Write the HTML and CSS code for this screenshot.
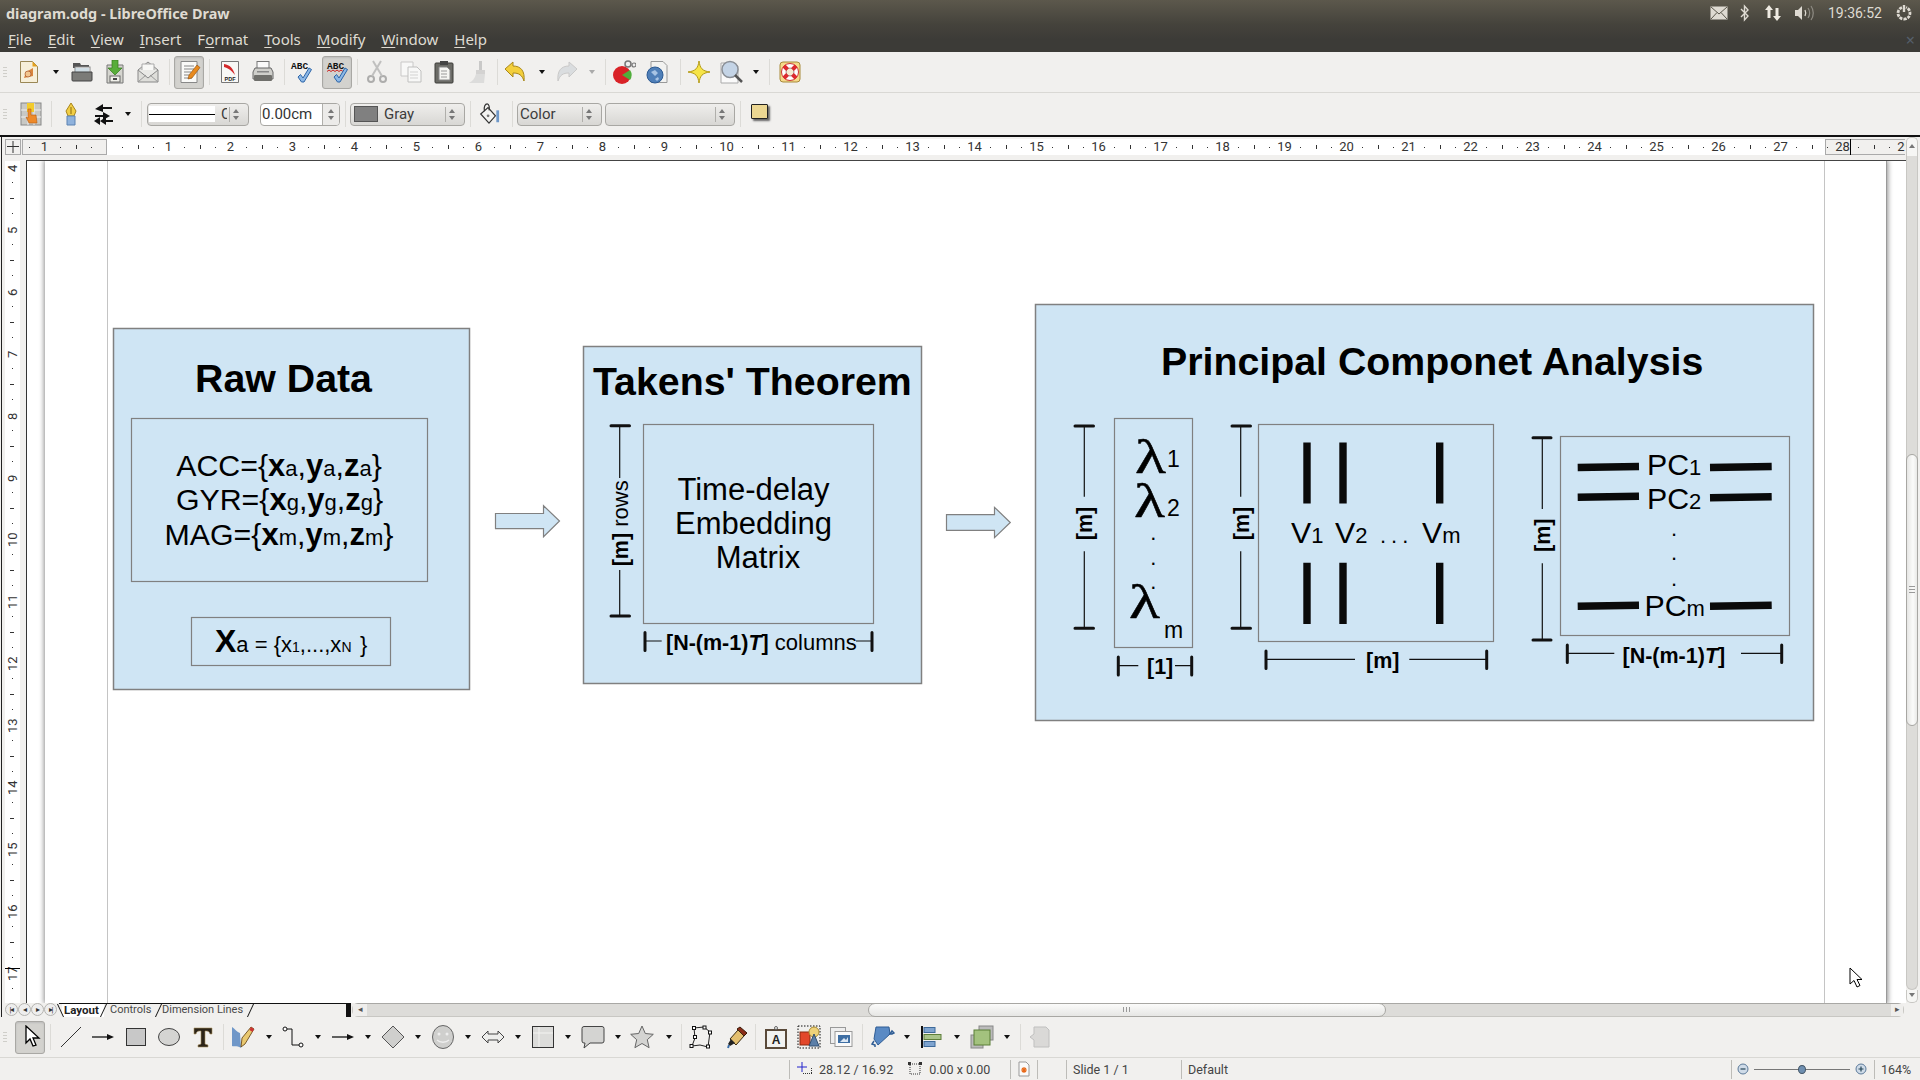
FILE: index.html
```html
<!DOCTYPE html>
<html lang="en">
<head>
<meta charset="utf-8">
<title>diagram.odg - LibreOffice Draw</title>
<link rel="stylesheet" href="styles.css">
</head>
<body>
<div class="app">

<header class="panel">
  <div class="titlebar">
    <div class="wintitle">diagram.odg - LibreOffice Draw</div>
    <div class="tray">
      <svg class="tr tr-mail" viewBox="0 0 18 14"><rect x="0.5" y="0.5" width="17" height="13" fill="#dedad2"/><path d="M1 1l8 7 8-7M1 13l6-6.5M17 13l-6-6.5" fill="none" stroke="#5a574c"/></svg>
      <svg class="tr tr-bt" viewBox="0 0 10 18"><path d="M1 5l7 7-3.5 4V2L8 6l-7 7" fill="none" stroke="#dedad2" stroke-width="1.4"/></svg>
      <svg class="tr tr-net" viewBox="0 0 18 18"><path d="M5 1l4 5H6.5v8h-3V6H1z" fill="#eeeae2"/><path d="M13 17l4-5h-2.500V4h-3v8H9z" fill="#eeeae2"/></svg>
      <svg class="tr tr-snd" viewBox="0 0 20 16"><path d="M1 5h3l4-4v14l-4-4H1z" fill="#dedad2"/><path d="M11 5c1 2 1 4 0 6" fill="none" stroke="#dedad2" stroke-width="1.300"/><path d="M14 3c2 3 2 7 0 10M17 1c3 4 3 10 0 14" fill="none" stroke="#8f8c84" stroke-width="1.200"/></svg>
      <span class="clock">19:36:52</span>
      <svg class="tr tr-pow" viewBox="0 0 16 16"><path d="M6 2.500a6 6 0 1 0 4 0" fill="none" stroke="#dedad2" stroke-width="2.800" stroke-dasharray="3 1"/><path d="M8 0v7" stroke="#dedad2" stroke-width="2.400"/></svg>
    </div>
  </div>
  <nav class="menubar">
    <span class="mi"><u>F</u>ile</span><span class="mi"><u>E</u>dit</span><span class="mi"><u>V</u>iew</span><span class="mi"><u>I</u>nsert</span><span class="mi">F<u>o</u>rmat</span><span class="mi"><u>T</u>ools</span><span class="mi"><u>M</u>odify</span><span class="mi"><u>W</u>indow</span><span class="mi"><u>H</u>elp</span>
    <span class="winclose">×</span>
  </nav>
</header>

<div class="tb tb1">
  <i class="grip"></i>
  <svg class="ic" viewBox="0 0 24 24"><path d="M3.500 1.500h12l5 5v16h-17z" fill="#f7efd9" stroke="#9a8755"/><path d="M15.500 1.500l5 5h-5z" fill="#e4a11f"/><path d="M7 18l2-6 7-4 0 8z" fill="#d9843b"/><circle cx="11" cy="14" r="3" fill="#f2c58e" stroke="#a8552a" stroke-width=".7"/></svg>
  <i class="dd"></i>
  <svg class="ic" viewBox="0 0 24 24"><path d="M3 6V3h7l1 2h8v3H3z" fill="#555"/><rect x="5" y="7" width="15" height="6" fill="#fff" stroke="#888"/><path d="M5 9h14M5 11h14" stroke="#8ab" stroke-width=".8"/><path d="M2 12h20v8a1 1 0 0 1-1 1H3a1 1 0 0 1-1-1z" fill="#7b7b78" stroke="#444"/></svg>
  <svg class="ic" viewBox="0 0 24 24"><path d="M4 5h16v18H4z" fill="#d5d5cf" stroke="#777"/><rect x="7" y="16" width="10" height="6" fill="#f0f0ea" stroke="#666"/><rect x="10" y="18" width="4" height="2" fill="#444"/><path d="M9 0h6v8h4l-7 7-7-7h4z" fill="#58ad3a" stroke="#347a1e" stroke-width=".7"/></svg>
  <svg class="ic" viewBox="0 0 24 24"><path d="M2 10L12 2l10 8v12H2z" fill="#dededa" stroke="#888"/><path d="M6 4h12v9H6z" fill="#f8f8f6" stroke="#aaa"/><path d="M2 10l10 8 10-8" fill="#e9e9e6" stroke="#888"/><path d="M2 22l8-7M22 22l-8-7" stroke="#999"/></svg>
  <i class="sp"></i>
  <span class="act"><svg class="ic0" viewBox="0 0 24 24"><path d="M4 1.500h16v21H4z" fill="#fafaf8" stroke="#888"/><path d="M7 6h10M7 9h10M7 12h7M7 15h5M7 18h8" stroke="#888"/><path d="M11 19l1-4L20 5l3 2.500L15 18z" fill="#e88a1e" stroke="#8a4c0c" stroke-width=".6"/></svg></span>
  <i class="sp"></i>
  <svg class="ic" viewBox="0 0 24 24"><path d="M3.500 1.500h17v21h-17z" fill="#f8f8f6" stroke="#777"/><path d="M6 4c6 1 9 4 11 11-4-5-7-7-11-8z" fill="#d3282a"/><text class="pdf" x="12" y="21" text-anchor="middle">PDF</text></svg>
  <svg class="ic" viewBox="0 0 24 24"><rect x="6" y="1.500" width="12" height="8" fill="#fafafa" stroke="#777"/><path d="M4 8h16l2 4v7H2v-7z" fill="#cfcfcb" stroke="#666"/><rect x="3" y="15" width="18" height="6" rx="1" fill="#6f6f6b"/><rect x="6" y="11" width="12" height="1.500" fill="#888"/></svg>
  <i class="sp"></i>
  <svg class="ic" viewBox="0 0 24 24"><text class="abc" x="2" y="9">ABC</text><path d="M9 17l2.500-2.500 2.500 3.500 6-10 2.500 1.500-7.500 12.500h-2.500z" fill="#8db8e6" stroke="#2c65a8"/></svg>
  <span class="act"><svg class="ic0" viewBox="0 0 24 24"><text class="abc" x="2" y="9">ABC</text><path d="M2 11.500l2-1.500 2 1.500 2-1.500 2 1.500 2-1.500 2 1.500 2-1.500 2 1.500" fill="none" stroke="#c22"/><path d="M9 17l2.500-2.500 2.500 3.500 6-10 2.500 1.500-7.500 12.500h-2.500z" fill="#8db8e6" stroke="#2c65a8"/></svg></span>
  <i class="sp"></i>
  <svg class="ic off" viewBox="0 0 24 24"><circle cx="6" cy="19" r="3" fill="none" stroke="#777" stroke-width="2"/><circle cx="18" cy="19" r="3" fill="none" stroke="#777" stroke-width="2"/><path d="M7 16L16 1M17 16L8 1" stroke="#999" stroke-width="2"/></svg>
  <svg class="ic off" viewBox="0 0 24 24"><path d="M2 2h12v14H2z" fill="#fff" stroke="#aaa"/><path d="M9 7h9l4 4v11H9z" fill="#fff" stroke="#999"/><path d="M11 12h8M11 15h8M11 18h8" stroke="#bbb"/></svg>
  <svg class="ic" viewBox="0 0 24 24"><rect x="3" y="3" width="18" height="20" rx="1" fill="#6b6b66" stroke="#3c3c38"/><rect x="8" y="1" width="8" height="4" fill="#444"/><path d="M7 7h8l3 3v10H7z" fill="#f5f5f2" stroke="#888"/><path d="M9 11h6M9 14h6M9 17h6" stroke="#999"/></svg>
  <svg class="ic off" viewBox="0 0 24 24"><path d="M14 1h3v9h-3z" fill="#aaa"/><path d="M11 10h9v4h-9z" fill="#bbb"/><path d="M11 14h9l-1 9H4c4-2 6-5 7-9z" fill="#ccc"/></svg>
  <i class="sp"></i>
  <svg class="ic" viewBox="0 0 24 24"><path d="M2 9l8-7v4c8 0 12 5 11 15-2-6-5-8-11-8v4z" fill="#f3cf3c" stroke="#a8871a"/></svg>
  <i class="dd"></i>
  <svg class="ic off" viewBox="0 0 24 24"><path d="M22 9l-8-7v4C6 6 2 11 3 21c2-6 5-8 11-8v4z" fill="#c9cfd4" stroke="#aaa"/></svg>
  <i class="dd dd-off"></i>
  <i class="sp"></i>
  <svg class="ic" viewBox="0 0 24 24"><circle cx="10" cy="15" r="9" fill="#d92227"/><path d="M10 15l8-5a9 9 0 0 1 0 10z" fill="#4fae3a"/><circle cx="16" cy="4" r="3" fill="#eee" stroke="#777" stroke-width="1.500"/><circle cx="22" cy="5" r="2" fill="#eee" stroke="#777" stroke-width="1.200"/></svg>
  <svg class="ic" viewBox="0 0 24 24"><path d="M5 1.500h12l4 4v17H5z" fill="#f2f2f0" stroke="#999"/><circle cx="9" cy="15" r="8" fill="#4f7fb8" stroke="#2b5a93"/><path d="M5 12l4-2 3 3-3 3zM9 19l3-2 1 2-2 2z" fill="#a8c4e4"/></svg>
  <i class="sp"></i>
  <svg class="ic" viewBox="0 0 24 24"><path d="M12 1c1 7 3 10 11 11-8 1-10 4-11 11-1-7-3-10-11-11 8-1 10-4 11-11z" fill="#f6e447" stroke="#b49a14"/></svg>
  <svg class="ic" viewBox="0 0 24 24"><path d="M2 3h14l3 3v17H2z" fill="#fafafa" stroke="#aaa"/><circle cx="11" cy="9.500" r="8" fill="#c4d4e6" stroke="#8a8f96" stroke-width="1.500"/><path d="M16 15l7 7" stroke="#555" stroke-width="2.500"/></svg>
  <i class="dd"></i>
  <i class="sp"></i>
  <svg class="ic" viewBox="0 0 24 24"><rect x="2" y="2" width="20" height="20" rx="3" fill="#f5d98a" stroke="#a88a3a"/><circle cx="12" cy="12" r="8.500" fill="#fff" stroke="#c33"/><circle cx="12" cy="12" r="4" fill="#f5ead0" stroke="#a88"/><path d="M6 6l3.500 3.500M18 6l-3.500 3.500M6 18l3.500-3.500M18 18l-3.500-3.500" stroke="#dd2a2e" stroke-width="4"/></svg>
</div>

<div class="tb tb2">
  <i class="grip"></i>
  <svg class="ic2" viewBox="0 0 22 24"><rect x="1" y="1" width="20" height="22" fill="#c8c8c4" stroke="#888"/><path d="M8 1v22M14 1v22M1 8h20M1 15h20" stroke="#eee"/><rect x="7" y="1" width="7" height="9" fill="#f2cb2c"/><path d="M8 7h3v6h5l1 8H9l-3-6 2 1z" fill="#ee8a2a" stroke="#b55a10" stroke-width=".6"/></svg>
  <i class="sp"></i>
  <svg class="ic2" viewBox="0 0 22 24"><path d="M11 1l5 8-2 5H8L6 9z" fill="#f1ce45" stroke="#a9851a"/><path d="M11 5v7" stroke="#8a6c10"/><path d="M7 14h8v9H7z" fill="#8fb2dc" stroke="#5c83b2"/></svg>
  <svg class="ic2 wide" viewBox="0 0 24 24"><path d="M4 7l8-5v3h9v2h-9v3zM19 14l-7-4v3H4v2h8v3z" fill="#111"/><path d="M3 19l6-4v8zM9 19l6-4v8zM15 18h7v2h-7z" fill="#111"/></svg>
  <i class="dd"></i>
  <i class="sp"></i>
  <div class="combo c-line"><span class="linebox"><b class="linesample"></b></span><span class="cliptext">C</span><span class="spin"><em class="up"></em><em class="dn"></em></span></div>
  <div class="spinner"><span class="spval">0.00cm</span><span class="spbtn"><em class="up"></em><em class="dn"></em></span></div>
  <i class="sp"></i>
  <div class="combo c-gray"><b class="swatch"></b><span class="ctext">Gray</span><span class="spin"><em class="up"></em><em class="dn"></em></span></div>
  <i class="sp"></i>
  <svg class="ic2" viewBox="0 0 24 24"><path d="M3 12L11 5l8 9-7 8z" fill="#f4f4f2" stroke="#333" stroke-width="1.300"/><path d="M7 9c-1-5 1-8 3-8s3 4 2 7" fill="none" stroke="#333" stroke-width="1.300"/><path d="M20 8h3v13h-3z" fill="#6f98c8"/><circle cx="11" cy="14" r="1.500" fill="#777"/></svg>
  <i class="sp"></i>
  <div class="combo c-color"><span class="ctext">Color</span><span class="spin"><em class="up"></em><em class="dn"></em></span></div>
  <div class="combo c-empty"><span class="spin"><em class="up"></em><em class="dn"></em></span></div>
  <i class="sp"></i>
  <b class="shadowbtn"></b>
</div>

<main class="workspace">
  <div class="ws-left">
    <div class="ruler-row">
      <svg class="corner" viewBox="0 0 16 16"><rect x=".5" y=".5" width="15" height="15" fill="#f1f0ee" stroke="#aaa"/><path d="M8 2v12M2 7.500h12" stroke="#333"/></svg>
      <div class="hruler">
        <div class="hnums"><span>1</span><span></span><span>1</span><span>2</span><span>3</span><span>4</span><span>5</span><span>6</span><span>7</span><span>8</span><span>9</span><span>10</span><span>11</span><span>12</span><span>13</span><span>14</span><span>15</span><span>16</span><span>17</span><span>18</span><span>19</span><span>20</span><span>21</span><span>22</span><span>23</span><span>24</span><span>25</span><span>26</span><span>27</span><span>28</span><span>29</span></div>
        <svg class="rticks" width="1883" height="16">
          <defs><pattern id="hp" patternUnits="userSpaceOnUse" x="85" y="0" width="62" height="16"><rect x="15" y="8" width="1" height="1" fill="#333"/><rect x="31" y="6" width="1" height="4" fill="#333"/><rect x="46" y="8" width="1" height="1" fill="#333"/></pattern></defs>
          <rect width="1883" height="16" fill="url(#hp)"/>
          <rect x=".5" y=".5" width="84" height="15" fill="none" stroke="#aaa"/>
          <rect x="1803.500" y=".5" width="80" height="15" fill="none" stroke="#aaa"/>
          <rect x="1828" y="0" width="1" height="18" fill="#000"/>
        </svg>
      </div>
    </div>
    <div class="main-row">
      <div class="vruler-col">
        <div class="vruler">
          <div class="vnums"><span>4</span><span>5</span><span>6</span><span>7</span><span>8</span><span>9</span><span>10</span><span>11</span><span>12</span><span>13</span><span>14</span><span>15</span><span>16</span><span>17</span></div>
          <svg class="vticks" width="15" height="842">
            <defs><pattern id="vp" patternUnits="userSpaceOnUse" x="0" y="6" width="15" height="62"><rect x="7" y="15" width="1" height="1" fill="#333"/><rect x="5" y="31" width="4" height="1" fill="#333"/><rect x="7" y="46" width="1" height="1" fill="#333"/></pattern></defs>
            <rect width="15" height="842" fill="url(#vp)"/>
            <rect x="0" y="807" width="15" height="1" fill="#000"/>
          </svg>
        </div>
      </div>
      <div class="canvas">
        <div class="page"></div>
        <svg class="drawing" viewBox="27 161 1878 842" width="1878" height="842">
          <path class="margin" d="M107.500 161V1003M1824.500 161V1003"/>

          <rect class="box" x="113.500" y="328.500" width="356" height="361"/>
          <text class="h" x="283.500" y="392" text-anchor="middle">Raw Data</text>
          <rect class="box in" x="131.500" y="418.500" width="296" height="163"/>
          <text class="b" x="279" y="476" text-anchor="middle">ACC={<tspan class="bo">x</tspan><tspan class="su">a</tspan>,<tspan class="bo">y</tspan><tspan class="su">a</tspan>,<tspan class="bo">z</tspan><tspan class="su">a</tspan>}</text>
          <text class="b" x="279.500" y="510" text-anchor="middle">GYR={<tspan class="bo">x</tspan><tspan class="su">g</tspan>,<tspan class="bo">y</tspan><tspan class="su">g</tspan>,<tspan class="bo">z</tspan><tspan class="su">g</tspan>}</text>
          <text class="b" x="279" y="545" text-anchor="middle">MAG={<tspan class="bo">x</tspan><tspan class="su">m</tspan>,<tspan class="bo">y</tspan><tspan class="su">m</tspan>,<tspan class="bo">z</tspan><tspan class="su">m</tspan>}</text>
          <rect class="box in" x="191.500" y="617.500" width="199" height="48"/>
          <text class="m" x="215" y="652"><tspan class="bx">X</tspan><tspan class="su">a</tspan> = {x<tspan class="ss">1</tspan>,...,x<tspan class="ss">N</tspan><tspan x="360">}</tspan></text>

          <path class="arrow" d="M495.500 513.500H543.500V505.700L559.500 521 543.500 536.700V528.700H495.500z"/>

          <rect class="box" x="583.500" y="346.500" width="338" height="337"/>
          <text class="h" x="593" y="394.500">Takens' Theorem</text>
          <rect class="box in" x="643.500" y="424.500" width="230" height="199"/>
          <text class="b b31" x="753.500" y="499.500" text-anchor="middle">Time-delay</text>
          <text class="b b31" x="753.500" y="533.500" text-anchor="middle">Embedding</text>
          <text class="b b31" x="758" y="568" text-anchor="middle">Matrix</text>
          <path class="tick" d="M611 425.700H629.500M611 616H629.500M645 632.500V650.500M872 632.500V650.500"/>
          <path class="thin" d="M619.700 425.700V478M619.700 570V616M645 641H661.700M856 641H872"/>
          <text class="d" transform="rotate(-90 628 523.300)" x="628" y="523.300" text-anchor="middle"><tspan class="dbo">[m]</tspan> rows</text>
          <text class="d" x="666" y="650"><tspan class="dbo">[N-(m-1)<tspan class="dit">T</tspan>]</tspan> columns</text>

          <path class="arrow" d="M946.500 514.700H994.500V507.300L1010.300 522.500 994.500 537.700V530.300H946.500z"/>

          <rect class="box" x="1035.500" y="304.500" width="778" height="416"/>
          <text class="h" x="1161" y="375">Principal Componet Analysis</text>

          <path class="tick" d="M1075 426H1093.500M1075 628.300H1093.500"/>
          <path class="thin" d="M1084.300 426V496.700M1084.300 551.300V628.300"/>
          <text class="d dbo" transform="rotate(-90 1092 523.500)" x="1092" y="523.500" text-anchor="middle">[m]</text>
          <rect class="box in" x="1114.500" y="418.500" width="78" height="229"/>
          <text class="lam" transform="translate(1135 473) scale(1.33 1)">λ</text><text class="sub2" x="1167" y="467">1</text>
          <text class="lam" transform="translate(1134 517) scale(1.33 1)">λ</text><text class="sub2" x="1167" y="516">2</text>
          <text class="dot" x="1153.300" y="540" text-anchor="middle">.</text>
          <text class="dot" x="1153.300" y="565" text-anchor="middle">.</text>
          <text class="dot" x="1153.300" y="589" text-anchor="middle">.</text>
          <text class="lam" transform="translate(1129 618) scale(1.33 1)">λ</text><text class="sub2" x="1164" y="637.500">m</text>
          <path class="tick" d="M1118.300 657V675M1191.700 657V675"/>
          <path class="thin" d="M1118.300 665.700H1138.300M1175 665.700H1191.700"/>
          <text class="d dbo" x="1147" y="674">[1]</text>

          <path class="tick" d="M1232 426H1250.500M1232 628.300H1250.500"/>
          <path class="thin" d="M1240.700 426V496.700M1240.700 551.300V628.300"/>
          <text class="d dbo" transform="rotate(-90 1249 523.500)" x="1249" y="523.500" text-anchor="middle">[m]</text>
          <rect class="box in" x="1258.500" y="424.500" width="235" height="217"/>
          <path class="bar" d="M1307 442.500V503.500M1343 442.500V503.500M1439.700 442.500V503.500M1307 562.700V624M1343 562.700V624M1439.700 562.700V624"/>
          <text class="b" x="1291" y="542.500">V<tspan class="su">1</tspan></text>
          <text class="b" x="1335" y="542.500">V<tspan class="su">2</tspan></text>
          <text class="su" x="1380" y="542.500" letter-spacing="5">...</text>
          <text class="b" x="1422" y="542.500">V<tspan class="su">m</tspan></text>
          <path class="tick" d="M1266 651V668.500M1486.700 651V668.500"/>
          <path class="thin" d="M1266 659.300H1355M1409.300 659.300H1486.700"/>
          <text class="d dbo" x="1366" y="667.500">[m]</text>

          <path class="tick" d="M1533 437.700H1551M1533 640H1551"/>
          <path class="thin" d="M1542.300 437.700V509M1542.300 563.300V640"/>
          <text class="d dbo" transform="rotate(-90 1550 535.300)" x="1550" y="535.300" text-anchor="middle">[m]</text>
          <rect class="box in" x="1560.500" y="436.500" width="229" height="199"/>
          <path class="bar" d="M1577.700 467.500L1639 466.500M1710 467.500L1771.700 466.500M1577.700 497.200L1639 496.200M1710 497.700L1771.700 496.700M1577.700 606.200L1639 605.200M1710 606.200L1771.700 605.200"/>
          <text class="b" x="1647" y="474.500">PC<tspan class="su">1</tspan></text>
          <text class="b" x="1647" y="509">PC<tspan class="su">2</tspan></text>
          <text class="dot" x="1674" y="536" text-anchor="middle">.</text>
          <text class="dot" x="1674" y="560" text-anchor="middle">.</text>
          <text class="dot" x="1674" y="585.500" text-anchor="middle">.</text>
          <text class="b" x="1644.500" y="616">PC<tspan class="su">m</tspan></text>
          <path class="tick" d="M1567.300 645V662.500M1781.700 645V662.500"/>
          <path class="thin" d="M1567.300 653.300H1614.300M1741 653.300H1781.700"/>
          <text class="d dbo" x="1622.500" y="662.500">[N-(m-1)<tspan class="dit">T</tspan>]</text>
        </svg>
        <svg class="cursor" viewBox="0 0 14 21"><path d="M1 1v16l4-3.500 3 6.500 3-1.500-3-6h5z" fill="#fff" stroke="#000"/></svg>
      </div>
    </div>
  </div>
  <div class="vscroll">
    <div class="vbtn"><em class="up"></em></div>
    <div class="vtrough"><div class="vthumb"><span class="vgrip"></span></div></div>
    <div class="vbtn vbtn-d"><em class="dn"></em></div>
  </div>
</main>

<div class="tabrow">
  <div class="tabnav"><span class="nv">|◂</span><span class="nv">◂</span><span class="nv">▸</span><span class="nv">▸|</span></div>
  <div class="tabs">
    <span class="tab on">Layout</span><span class="tab t2">Controls</span><span class="tab t3">Dimension Lines</span>
  </div>
  <div class="hscroll"><span class="hbtn hb-l">◂</span><div class="hthumb"><span class="hgrip"></span></div><span class="hbtn hb-r">▸</span></div>
</div>

<div class="tb tb3">
  <i class="grip"></i>
  <span class="act a3"><svg class="ic0" viewBox="0 0 24 24"><path d="M8 1v17l4-4 3 7 3-1-3-7h6z" fill="#fff" stroke="#000" stroke-width="1.300"/></svg></span>
  <i class="sp"></i>
  <svg class="ic" viewBox="0 0 24 24"><path d="M2 22L22 2" stroke="#333"/></svg>
  <svg class="ic" viewBox="0 0 24 24"><path d="M1 12h16" stroke="#111" stroke-width="1.300"/><path d="M16 9l7 3-7 3z" fill="#111"/></svg>
  <svg class="ic" viewBox="0 0 24 24"><rect x="2.500" y="3.500" width="19" height="17" fill="#c8c8c8" stroke="#333"/></svg>
  <svg class="ic" viewBox="0 0 24 24"><ellipse cx="12" cy="12" rx="10.500" ry="8.500" fill="#d4d4d2" stroke="#444"/></svg>
  <svg class="ic" viewBox="0 0 24 24"><path d="M3 3h18v6h-2c-1-3-2-3-5-3v13l3 1v2H7v-2l3-1V6C7 6 6 6 5 9H3z" fill="#2c2418" stroke="#a89060" stroke-width=".6"/></svg>
  <i class="sp"></i>
  <svg class="ic" viewBox="0 0 24 24"><path d="M1 2c4 3 5 5 8 6l1 15C5 20 3 22 1 21z" fill="#6f97c8"/><path d="M10 22l1-9L20 2l3 2-9 15z" fill="#e9c870" stroke="#5a3a0a" stroke-width=".8"/><path d="M20 2l3 2-1.500 3-3-2z" fill="#c33"/></svg>
  <i class="dd"></i>
  <svg class="ic" viewBox="0 0 24 24"><circle cx="4" cy="4" r="2" fill="#fff" stroke="#111"/><circle cx="20" cy="20" r="2" fill="#fff" stroke="#111"/><path d="M6 4h5v16h7" fill="none" stroke="#111"/></svg>
  <i class="dd"></i>
  <svg class="ic" viewBox="0 0 24 24"><path d="M1 12h16" stroke="#111" stroke-width="1.300"/><path d="M16 9l7 3-7 3z" fill="#111"/></svg>
  <i class="dd"></i>
  <svg class="ic" viewBox="0 0 24 24"><path d="M12 1l11 11-11 11L1 12z" fill="#cfcfcd" stroke="#555"/></svg>
  <i class="dd"></i>
  <svg class="ic" viewBox="0 0 24 24"><ellipse cx="12" cy="12" rx="10.500" ry="11.500" fill="#cfcfcd" stroke="#666"/><circle cx="8" cy="9" r="1.500" fill="#eee"/><circle cx="16" cy="9" r="1.500" fill="#eee"/><path d="M6 15c3 3 9 3 12 0" fill="none" stroke="#eee" stroke-width="1.300"/></svg>
  <i class="dd"></i>
  <svg class="ic" viewBox="0 0 24 24"><path d="M1 12l6-6v3h10V6l6 6-6 6v-3H7v3z" fill="#eeeeec" stroke="#444"/></svg>
  <i class="dd"></i>
  <svg class="ic" viewBox="0 0 24 24"><rect x="1.500" y="1.500" width="21" height="21" fill="#dcdcda" stroke="#333"/><path d="M8 2v20M2 8h20" stroke="#f4f4f2"/></svg>
  <i class="dd"></i>
  <svg class="ic" viewBox="0 0 24 24"><path d="M3 1.500h18a2 2 0 0 1 2 2V16a2 2 0 0 1-2 2H9l-6 5 1-5H3a2 2 0 0 1-2-2V3.500a2 2 0 0 1 2-2z" fill="#d4d4d2" stroke="#444"/></svg>
  <i class="dd"></i>
  <svg class="ic" viewBox="0 0 24 24"><path d="M12 1l3.300 7.500 8 .8-6 5.400 1.800 8L12 18.500 4.900 22.700l1.800-8-6-5.400 8-.8z" fill="#d4d4d2" stroke="#666"/></svg>
  <i class="dd"></i>
  <i class="sp"></i>
  <svg class="ic" viewBox="0 0 24 24"><path d="M5 3l10-1 6 5-2 15-8-2-8 1 3-8z" fill="none" stroke="#222"/><rect x="3.500" y="1.500" width="3" height="3" fill="#fff" stroke="#111"/><rect x="14" y="1" width="3" height="3" fill="#fff" stroke="#111"/><rect x="19.500" y="6" width="3" height="3" fill="#fff" stroke="#111"/><rect x="17.500" y="20" width="3" height="3" fill="#fff" stroke="#111"/><rect x="1" y="19.500" width="3" height="3" fill="#fff" stroke="#111"/><rect x="4.500" y="10.500" width="3" height="3" fill="#fff" stroke="#111"/></svg>
  <svg class="ic" viewBox="0 0 24 24"><path d="M15 2l7 6-3 3-7-7z" fill="#8a2d18" stroke="#3a1a08"/><path d="M13 5l6 6-8 9-6-6z" fill="#e4c070" stroke="#3a2a10"/><path d="M6 14l4 4-5 3-2-2z" fill="#222"/><path d="M4 20l-1 3" stroke="#3a6ea8" stroke-width="2"/></svg>
  <i class="sp"></i>
  <svg class="ic" viewBox="0 0 24 24"><rect x="2" y="5" width="20" height="18" fill="#f2f2f0" stroke="#5a4a3a" stroke-width="2"/><circle cx="12" cy="3" r="1.500" fill="none" stroke="#666"/><text class="fa" x="12" y="19" text-anchor="middle">A</text></svg>
  <svg class="ic" viewBox="0 0 24 24"><rect x="1" y="1" width="22" height="22" fill="none" stroke="#111" stroke-dasharray="1.500 1.500"/><rect x="3" y="7" width="10" height="13" fill="#e3472a" stroke="#8a2a10"/><circle cx="17" cy="7" r="5" fill="#efd27a" stroke="#a68a30"/><path d="M12 21l5-12 5 12z" fill="#5c7fa8" stroke="#324f70"/></svg>
  <svg class="ic" viewBox="0 0 24 24"><rect x="1.500" y="2.500" width="15" height="16" fill="#eee" stroke="#999"/><rect x="6" y="6.500" width="17" height="15" fill="#fafafa" stroke="#999"/><rect x="9" y="10" width="12" height="8" fill="#3f6fa4"/><path d="M11 17l4-4 2 2 2-3v5z" fill="#dbe7f4"/></svg>
  <i class="sp"></i>
  <svg class="ic" viewBox="0 0 24 24"><path d="M5 2h13l1 7L7 20l-4-6z" fill="#5a8ac4" stroke="#2e5c94"/><path d="M19 9l2-3 2 2-2 1zM3 16l-2 3 3 1v2" fill="none" stroke="#2e5c94" stroke-width="1.500"/></svg>
  <i class="dd"></i>
  <svg class="ic" viewBox="0 0 24 24"><path d="M3 1v22" stroke="#111" stroke-width="2"/><rect x="5" y="2.500" width="11" height="5" fill="#7fa4cf" stroke="#3f6a9a"/><rect x="5" y="9.500" width="17" height="5" fill="#a9c48a" stroke="#5f7f3a"/><rect x="5" y="16.500" width="11" height="5" fill="#7fa4cf" stroke="#3f6a9a"/></svg>
  <i class="dd"></i>
  <svg class="ic" viewBox="0 0 24 24"><rect x="9" y="1" width="14" height="14" fill="#bbb" stroke="#888"/><rect x="1" y="10" width="12" height="13" fill="#bbb" stroke="#888"/><rect x="4" y="5" width="16" height="15" fill="#a3c27e" stroke="#5b7f36"/></svg>
  <i class="dd"></i>
  <i class="sp"></i>
  <svg class="ic off" viewBox="0 0 24 24"><path d="M6 2h12l3 3v17H6v-7l-4-3 4-3z" fill="#c8c8c6" stroke="#999"/></svg>
</div>

<footer class="statusbar">
  <div class="cell c1"></div>
  <div class="cell c2">
    <svg class="st" viewBox="0 0 16 16"><path d="M5 1v10M0 6h10" stroke="#22c"/><path d="M6 12.500h9M14.500 7v6" stroke="#333" stroke-dasharray="1 1"/></svg>
    <span class="stxt s-pos">28.12 / 16.92</span>
    <svg class="st" viewBox="0 0 16 16"><path d="M3 3h10v10H3z" fill="none" stroke="#333" stroke-dasharray="1 1"/><rect x="1" y="1" width="3" height="3" fill="#333"/><rect x="12" y="1" width="3" height="3" fill="#333"/></svg>
    <span class="stxt">0.00 x 0.00</span>
  </div>
  <div class="cell c3"><svg class="st" viewBox="0 0 14 16"><path d="M2 1h7l3 3v11H2z" fill="#fafafa" stroke="#999"/><path d="M7 6v6M4 9h6M5 7l4 4M9 7l-4 4" stroke="#e8691a" stroke-width="1.200"/></svg></div>
  <div class="cell c4"></div>
  <div class="cell c5"><span class="stxt">Slide 1 / 1</span></div>
  <div class="cell c6"><span class="stxt">Default</span></div>
  <div class="cell c7">
    <svg class="zb" viewBox="0 0 12 12"><circle cx="6" cy="6" r="5" fill="#cfdbe8" stroke="#5c7a9a"/><path d="M3.500 6h5" stroke="#245" stroke-width="1.200"/></svg>
    <div class="zslider"><span class="zknob"></span></div>
    <svg class="zb" viewBox="0 0 12 12"><circle cx="6" cy="6" r="5" fill="#cfdbe8" stroke="#5c7a9a"/><path d="M3.500 6h5M6 3.500v5" stroke="#245" stroke-width="1.200"/></svg>
  </div>
  <div class="cell c8"><span class="stxt">164%</span></div>
</footer>

</div>
</body>
</html>
```

FILE: styles.css
```css
* { box-sizing: border-box; }
html, body { margin: 0; padding: 0; }
body { width: 1920px; height: 1080px; overflow: hidden; background: #f1f0ee; font-family: Roboto, "Noto Sans", sans-serif; color: #3c3c3c; }
.app { display: flex; flex-direction: column; width: 1920px; height: 1080px; }

/* top panel */
.panel { height: 52px; flex: none; background: linear-gradient(#5c584c 0, #45433c 24px, #3c3b37 40px, #3c3b37 100%); color: #dfdbd2; }
.titlebar { height: 26px; display: flex; align-items: center; justify-content: space-between; }
.wintitle { margin-left: 6px; font-family: "Noto Sans", sans-serif; font-size: 14.400px; font-weight: 700; color: #dfdbd2; }
.tray { display: flex; align-items: center; height: 26px; position: relative; width: 220px; }
.tr { display: block; flex: none; }
.tr-mail { width: 18px; height: 14px; margin-left: 10px; }
.tr-bt { width: 10px; height: 18px; margin-left: 12px; }
.tr-net { width: 18px; height: 18px; margin-left: 14px; }
.tr-snd { width: 20px; height: 16px; margin-left: 12px; }
.clock { margin-left: 14px; font-size: 14px; color: #dfdbd2; width: 56px; flex: none; }
.tr-pow { width: 16px; height: 16px; margin-left: 12px; }
.menubar { height: 26px; display: flex; align-items: center; padding-left: 8px; gap: 16px; font-family: "Noto Sans", sans-serif; font-size: 15px; position: relative; }
.mi u { text-underline-offset: 2px; }
.winclose { position: absolute; right: 5px; top: 3px; font-size: 16px; color: #56606c; }

/* toolbars */
.tb { flex: none; display: grid; grid-auto-flow: column; justify-content: start; align-items: center; background: #f1f0ee; }
.tb1 { height: 41px; padding-left: 5px; border-bottom: 1px solid #d9d8d4; box-shadow: 0 1px 0 #fff;
  grid-template-columns: 24px 27px 26px 33px 33px 21px 20px 20px 21px 33px 21px 17px 36px 20px 20px 34px 33px 33px 20px 18px 27px 25px 25px 13px 19px 34px 22px 19px 32px 25px 13px 21px 30px; }
.tb2 { height: 42px; padding-left: 3px;
  grid-template-columns: 17px 31px 9px 31px 34px 16px 6px 113px 85px 5px 120px 8px 34px 5px 88px 135px 11px 30px; }
.tb3 { height: 41px; padding-left: 5px; border-bottom: 1px solid #d9d8d4;
  grid-template-columns: 25px 20px 21px 32px 33px 33px 34px 20px 20px 26px 24px 25px 25px 25px 25px 25px 25px 25px 25px 25px 25px 25px 25px 25px 24px 27px 12px 20px 36px 18px 21px 33px 32px 21px 21px 24px 24px 26px 25px 25px 13px 20px 30px; }
.grip { display: block; width: 4px; height: 10px; margin-left: -2px; background: repeating-linear-gradient(#cfcec9 0 1px, transparent 1px 3px); }
.tb2 .grip { margin-left: 0; }
.ic { display: block; width: 24px; height: 24px; margin-left: -12px; }
.ic0 { display: block; width: 24px; height: 24px; }
.ic2 { display: block; width: 22px; height: 24px; }
.ic2.wide { width: 24px; }
.off { opacity: .55; }
.dd { display: block; width: 0; height: 0; margin-left: -3px; border: 3.500px solid transparent; border-top: 4px solid #111; border-bottom: 0; }
.tb2 .dd { margin-left: 0; }
.dd-off { border-top-color: #aaa; }
.sp { display: block; width: 1px; height: 26px; background: #dcdbd7; }
.act { display: flex; align-items: center; justify-content: center; width: 30px; height: 33px; margin-left: -15px; border: 1px solid #a9a8a4; border-radius: 3px; background: #d3d2ce; box-shadow: inset 0 1px 2px #bbb; }
.a3 { height: 33px; }
.pdf { font: bold 5.500px "Liberation Sans", sans-serif; fill: #222; }
.abc { font: bold 9.500px "Liberation Mono", monospace; fill: #111; }
.fa { font: bold 12px "Liberation Sans", sans-serif; fill: #222; }

/* combos */
.combo { height: 23px; display: flex; align-items: center; border: 1px solid #a8a7a3; border-radius: 4px; background: linear-gradient(#efeeec, #d8d7d4); font-size: 15px; color: #3c3c3c; position: relative; }
.c-line { width: 102px; }
.linebox { display: flex; align-items: center; width: 66px; height: 16px; margin-left: 1px; background: #fff; }
.linesample { display: block; width: 100%; height: 1px; background: #000; }
.cliptext { width: 6px; overflow: hidden; margin-left: 6px; }
.c-gray { width: 115px; }
.swatch { display: block; width: 24px; height: 16px; margin-left: 3px; background: #808080; border: 1px solid #555; }
.ctext { margin-left: 6px; }
.c-color { width: 85px; }
.c-color .ctext { margin-left: 2px; }
.c-empty { width: 130px; }
.spin { position: absolute; right: 0; top: 3px; bottom: 3px; width: 19px; padding-right: 6px; border-left: 1px solid #b0afab; display: flex; flex-direction: column; align-items: center; justify-content: center; gap: 3px; }
.up { display: block; width: 0; height: 0; border: 3.500px solid transparent; border-bottom: 4px solid #777; border-top: 0; }
.dn { display: block; width: 0; height: 0; border: 3.500px solid transparent; border-top: 4px solid #777; border-bottom: 0; }
.spinner { width: 80px; height: 23px; display: flex; border: 1px solid #a8a7a3; border-radius: 4px; background: #fff; font-size: 15px; overflow: hidden; }
.spval { flex: 1; padding-left: 1px; line-height: 21px; color: #333; }
.spbtn { width: 17px; background: #ecebe9; border-left: 1px solid #b0afab; display: flex; flex-direction: column; align-items: center; justify-content: center; gap: 3px; }
.shadowbtn { display: block; width: 17px; height: 15px; margin-top: -5px; background: #ecd792; border: 1px solid #222; border-radius: 1px; box-shadow: 2px 2px 2px #666; }

/* workspace */
.workspace { flex: none; height: 868px; display: flex; background: #f1f0ee; border-top: 2px solid #111; border-left: 0; }
.ws-left { width: 1905px; margin-left: 1px; border-left: 1.500px solid #222; margin-right: 0; display: flex; flex-direction: column; flex: none; }
.ruler-row { height: 23px; flex: none; display: flex; padding-top: 2px; padding-left: 2.500px; }
.corner { width: 16px; height: 16px; flex: none; display: block; }
.hruler { position: relative; width: 1883px; height: 16px; margin-left: 1px; overflow: hidden; background: linear-gradient(90deg, #f1f0ee 85px, #fff 85px, #fff 1803px, #f1f0ee 1803px); }
.hnums { display: flex; margin-left: -8px; }
.hnums span { flex: none; width: 62px; text-align: center; font-size: 13px; line-height: 16px; color: #333; }
.rticks { position: absolute; left: 0; top: 0; }
.main-row { flex: 1; display: flex; min-height: 0; }
.vruler-col { width: 23.500px; flex: none; padding: 1px 0 0 3px; overflow: hidden; }
.vruler { position: relative; width: 15px; height: 842px; background: #fff; overflow: hidden; }
.vnums { display: flex; flex-direction: column; margin-top: -24.500px; }
.vnums span { flex: none; height: 62px; display: flex; align-items: center; justify-content: center; font-size: 13px; line-height: 15px; color: #333; writing-mode: vertical-rl; transform: rotate(180deg); }
.vticks { position: absolute; left: 0; top: 0; }
.canvas { position: relative; flex: 1; background: #fff; border-left: 1.500px solid #333; border-top: 1.500px solid #444; overflow: hidden; }
.page { height: 100%; width: 1842px; margin-left: 18px; background: #fff; box-shadow: 0 0 5px 1px #8f8f8f; border-right: 1px solid #9a9a9a; }
.drawing { position: absolute; left: 0; top: 0; }
.cursor { position: absolute; left: 1822px; top: 806px; width: 14px; height: 21px; }

/* diagram */
.margin { fill: none; stroke: #c4c4c4; stroke-width: 1; }
.box { fill: #cfe5f4; stroke: #808080; stroke-width: 1.500; }
.box.in { stroke-width: 1.200; }
.drawing text { font-family: "Liberation Sans", sans-serif; fill: #000; }
.drawing .h { font-size: 39.300px; font-weight: 700; }
.drawing .b { font-size: 30.300px; }
.drawing .b31 { font-size: 31px; }
.bo { font-weight: 700; font-size: 31px; }
.su { font-size: 22px; }
.ss { font-size: 14px; }
.bx { font-weight: 700; font-size: 32px; }
.drawing .m { font-size: 22px; }
.drawing .d { font-size: 22px; }
.drawing .dbo, .dbo { font-weight: 700; font-size: 21.500px; }
.dit { font-style: italic; }
.drawing .lam { font-family: "Liberation Serif", serif; font-size: 48px; stroke: #000; stroke-width: .5; }
.drawing .sub2 { font-size: 23px; }
.drawing .dot { font-size: 22px; }
.arrow { fill: #cfe5f4; stroke: #808080; stroke-width: 1.200; }
.tick { fill: none; stroke: #111; stroke-width: 3; stroke-linecap: round; }
.thin { fill: none; stroke: #111; stroke-width: 1.200; }
.bar { fill: none; stroke: #0a0a0a; stroke-width: 7.400; stroke-linecap: butt; }

/* vertical scrollbar */
.vscroll { width: 12px; flex: none; margin-left: 0; display: flex; flex-direction: column; margin-top: 0; }
.vbtn { height: 19px; flex: none; border: 1px solid #c8c7c3; border-bottom: 0; border-radius: 5px 5px 0 0; background: #f6f6f4; display: flex; justify-content: center; padding-top: 6px; }
.vbtn-d { height: 13px; border-radius: 0 0 5px 5px; border: 1px solid #c8c7c3; border-top: 0; padding-top: 3px; }
.vtrough { flex: 1; background: #dddcd9; border: 1px solid #c8c7c3; border-top: 0; border-radius: 0 0 6px 6px; padding-top: 298px; }
.vthumb { height: 272px; margin: 0 -1px; background: linear-gradient(90deg, #e6e6e4, #fbfbfa 60%, #e9e9e7); border: 1px solid #a8a7a3; border-radius: 6px; display: flex; justify-content: center; padding-top: 131px; }
.vgrip { display: block; width: 6px; height: 8px; background: repeating-linear-gradient(#999 0 1px, transparent 1px 3px); }

/* tabs */
.tabrow { height: 14px; flex: none; display: flex; background: #f1f0ee; position: relative; }
.tabnav { display: flex; width: 58px; flex: none; padding-left: 3px; gap: 0; border-left: 1.500px solid #222; margin-left: 1px; }
.nv { width: 13px; height: 13px; border: 1px solid #b5b4b0; border-radius: 50%; font-size: 8px; line-height: 11px; text-align: center; color: #333; background: #eee; letter-spacing: -1px; overflow: hidden; }
.tabs { display: flex; width: 292px; flex: none; height: 14px; border-top: 1.500px solid #111; border-right: 5px solid #111; padding-left: 3px; position: relative; background: #f1f0ee; }
.tab { position: relative; flex: none; white-space: nowrap; font-size: 11px; line-height: 12px; color: #4a4a4a; }
.tab::after { content: ""; position: absolute; right: 0; top: 0; bottom: 0; width: 1px; background: #111; transform: skewX(-25deg); }
.tab.on { font-weight: 700; color: #222; background: #fff; padding-left: 2px; width: 42px; font-size: 11.500px; }
.tab.on::before { content: ""; position: absolute; left: -2px; top: 0; bottom: 0; width: 1px; background: #111; transform: skewX(25deg); }
.t2 { width: 55px; padding-left: 6px; }
.t3 { width: 92px; padding-left: 3px; }
.hscroll { flex: 1; margin-left: 1px; margin-right: 16px; height: 14px; display: flex; background: #dddcd9; border: 1px solid #c8c7c3; border-top: 1.500px solid #a9a8a5; border-radius: 6px; position: relative; }
.hbtn { flex: none; width: 14px; font-size: 9px; line-height: 11px; text-align: center; background: #efeeec; color: #555; }
.hb-r { margin-left: auto; width: 12px; }
.hthumb { width: 518px; height: 14px; margin-top: -1.500px; margin-left: 501px; border: 1px solid #a8a7a3; border-radius: 7px; background: linear-gradient(#fbfbfa, #e6e6e4); display: flex; justify-content: center; align-items: center; }
.hgrip { display: block; width: 8px; height: 5px; background: repeating-linear-gradient(90deg, #999 0 1px, transparent 1px 3px); }

/* status */
.statusbar { flex: 1; display: flex; align-items: center; font-size: 12.500px; color: #444; background: #f1f0ee; min-height: 0; }
.cell { height: 19px; display: flex; align-items: center; border-left: 1px solid #bdbcb8; flex: none; }
.c1 { width: 789px; border-left: 0; }
.c2 { width: 221px; padding-left: 7px; }
.st { display: block; width: 16px; height: 16px; flex: none; }
.stxt { margin-left: 6px; white-space: nowrap; }
.s-pos { margin-right: 14px; }
.c3 { width: 27px; padding-left: 5px; }
.c4 { width: 29px; }
.c5 { width: 115px; }
.c6 { width: 550px; }
.c7 { width: 143px; padding-left: 5px; }
.c8 { flex: 1; }
.zb { display: block; width: 12px; height: 12px; flex: none; }
.zslider { position: relative; width: 96px; height: 1px; margin: 0 5px; background: #777; }
.zknob { position: absolute; left: 44px; top: -4px; width: 8px; height: 9px; border-radius: 50%; background: #6f8fb0; border: 1px solid #456; }
```
